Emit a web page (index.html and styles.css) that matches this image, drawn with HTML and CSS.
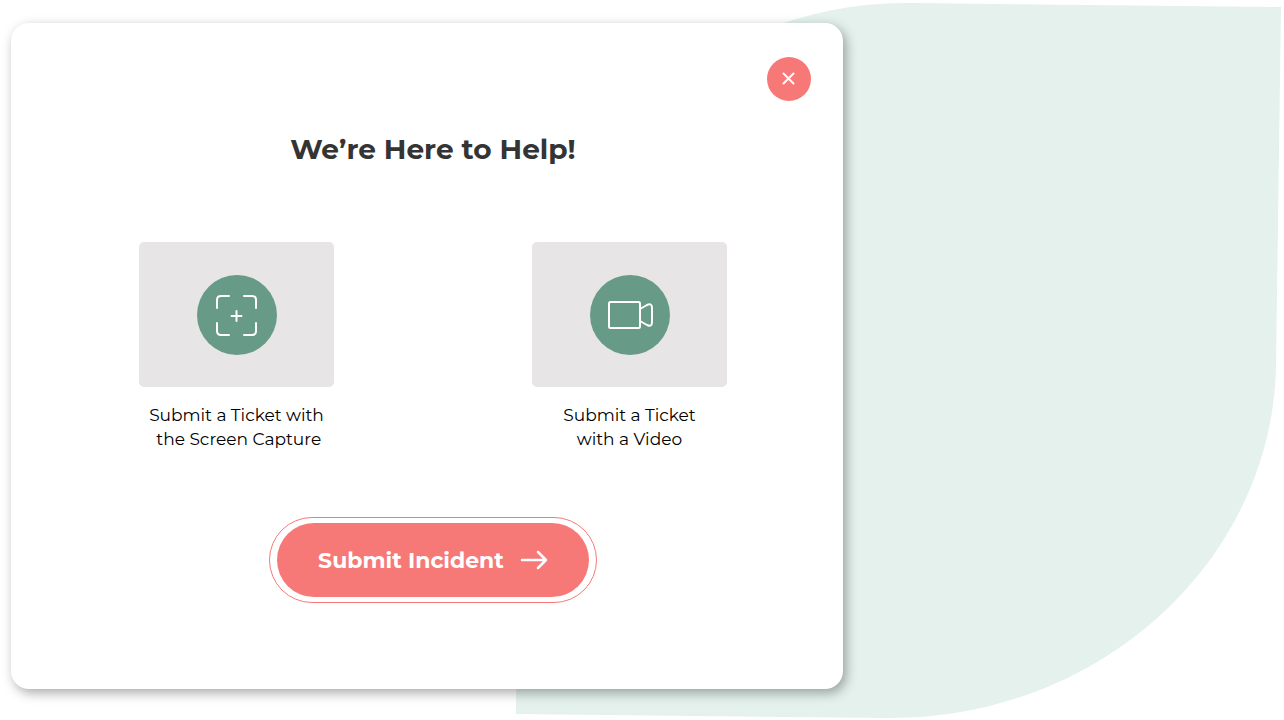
FILE: index.html
```html
<!DOCTYPE html>
<html lang="en">
<head>
<meta charset="utf-8">
<meta name="viewport" content="width=device-width, initial-scale=1">
<title>We’re Here to Help!</title>
<link rel="stylesheet" href="styles.css">
</head>
<body class="page">
<svg class="backdrop" viewBox="0 0 1284 720" preserveAspectRatio="xMidYMin meet" aria-hidden="true">
<path fill="#e4f1ec" d="M1281 7 910 3C697 1 521 172 519 385L516 714l374 4c213 0 383-160 386-353z"/>
</svg>
<main class="dialog">
<header class="dialog-top">
<button class="close" type="button" aria-label="Close">
<svg width="14" height="14" viewBox="0 0 14 14" fill="none" stroke="#fff" stroke-width="2" stroke-linecap="round" aria-hidden="true"><path d="m1.500 1.500 10 10M11.500 1.500l-10 10"/></svg>
</button>
</header>
<div class="content">
<h1 class="title">We’re Here to Help!</h1>
<div class="options">
<button class="option" type="button">
<span class="tile"><span class="disc">
<svg width="44" height="44" viewBox="0 0 44 44" fill="none" stroke="#fff" stroke-width="2" stroke-linecap="round" stroke-linejoin="round" aria-hidden="true"><path d="M2 15V7q0-4 4-4h8M29 3h8q4 0 4 4v8M41 30v8q0 4-4 4h-8M14 42H6q-4 0-4-4v-8M16.500 23h10M21.500 18v10"/></svg>
</span></span>
<span class="label">Submit a Ticket with<br>&nbsp;the Screen Capture</span>
</button>
<button class="option" type="button">
<span class="tile"><span class="disc">
<svg width="46" height="30" viewBox="0 0 46 30" fill="none" stroke="#fff" stroke-width="2" stroke-linejoin="round" aria-hidden="true"><rect x="2" y="2" width="31" height="26" rx="1.500"/><path d="m33 9 7-4q5-2.500 5 3v14q0 5.500-5 3l-7-4"/></svg>
</span></span>
<span class="label">Submit a Ticket<br>with a Video</span>
</button>
</div>
<button class="submit" type="submit">
<span class="submit-face">Submit Incident
<svg width="28" height="20" viewBox="0 0 28 20" fill="none" stroke="#fff" stroke-width="2.500" stroke-linecap="round" stroke-linejoin="round" aria-hidden="true"><path d="M2 10h24M18 2l8 8-8 8"/></svg>
</span>
</button>
</div>
</main>
</body>
</html>
```
FILE: styles.css
```css
* {
  box-sizing: border-box;
}

.page {
  margin: 0;
  padding: 23px 11px 31px;
  background: #fff;
  font-family: Montserrat, Inter, "Open Sans", sans-serif;
}

.backdrop {
  position: absolute;
  top: 0;
  left: 0;
  z-index: -1;
  width: 100%;
}

button {
  font: inherit;
  cursor: pointer;
}

.dialog {
  max-width: 832px;
  padding: 34px 32px 86px;
  border-radius: 18px;
  background: #fff;
  box-shadow: 3px 4px 12px rgba(0, 0, 0, 0.34);
}

.dialog-top {
  display: flex;
  justify-content: flex-end;
}

.close {
  display: grid;
  place-items: center;
  width: 44px;
  height: 44px;
  padding: 0;
  border: 0;
  border-radius: 50%;
  background: #f77977;
}

.content {
  display: flex;
  flex-direction: column;
  align-items: center;
  padding: 28px 0 0 12px;
}

.title {
  margin: 0;
  color: #343434;
  font-size: 28px;
  font-weight: 700;
  line-height: 40px;
}

.options {
  display: flex;
  flex-wrap: wrap;
  justify-content: center;
  gap: 32px 198px;
  margin: 73px 0 66px;
}

.option {
  display: flex;
  flex-direction: column;
  align-items: center;
  gap: 16px;
  width: 195px;
  padding: 0;
  border: 0;
  background: none;
  color: #000;
}

.tile {
  display: grid;
  place-items: center;
  width: 100%;
  height: 145px;
  border-radius: 5px;
  background: #e7e5e6;
}

.disc {
  display: grid;
  place-items: center;
  width: 80px;
  height: 80px;
  border-radius: 50%;
  background: #679a87;
}

.label {
  font-size: 17px;
  line-height: 24px;
  white-space: nowrap;
}

.submit {
  padding: 5px 7px;
  border: 1px solid #f77977;
  border-radius: 43px;
  background: #fff;
}

.submit-face {
  display: flex;
  align-items: center;
  justify-content: center;
  gap: 16px;
  width: 312px;
  height: 74px;
  border-radius: 37px;
  background: #f77977;
  color: #fff;
  font-size: 22px;
  font-weight: 700;
}
```
